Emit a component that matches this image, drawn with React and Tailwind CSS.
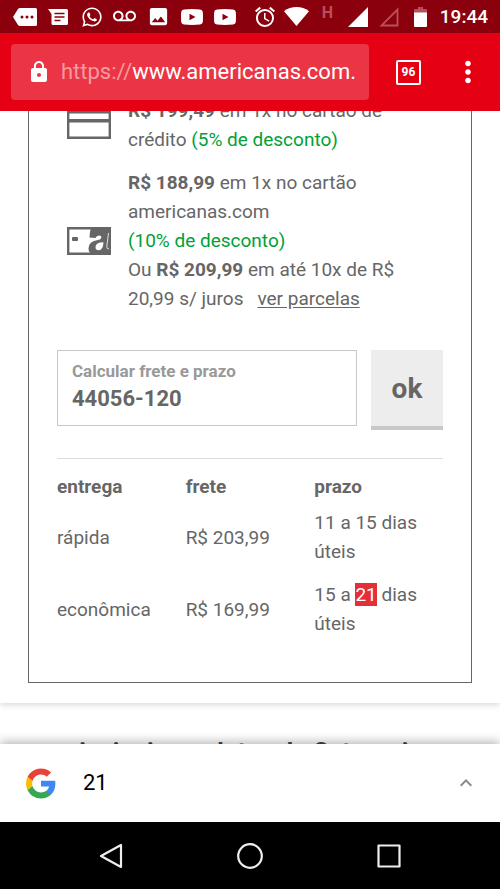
import React, { useState } from 'react';
import { FaWhatsapp } from 'react-icons/fa';
import {
  MdAlarm, MdImage, MdKeyboardArrowUp, MdLock, MdMoreVert, MdSignalCellular4Bar, MdVoicemail,
} from 'react-icons/md';

const shipping = [
  { name: 'rápida', price: 'R$ 203,99', from: '11 a ', to: '15', selected: false },
  { name: 'econômica', price: 'R$ 169,99', from: '15 a ', to: '21', selected: true },
];

function TagIcon() {
  return (
    <svg width="24" height="18" viewBox="0 0 24 18">
      <path d="M7 0h15.500q1.500 0 1.500 1.500v15q0 1.500-1.500 1.500H7q-1.200 0-2-1L0 9l5-8q.8-1 2-1z" fill="#fff" />
      <g fill="#8a000d">
        <circle cx="9" cy="9" r="1.500" />
        <circle cx="14" cy="9" r="1.500" />
        <circle cx="19" cy="9" r="1.500" />
      </g>
    </svg>
  );
}

function MessageIcon() {
  return (
    <svg width="20" height="16" viewBox="0 0 20 16">
      <path d="M0 0h18.500q1.500 0 1.500 1.500v13q0 1.500-1.500 1.500H5q-1.500 0-1.500-1.500V5z" fill="#fff" />
      <path d="M6.500 4.500h10M6.500 8h10M6.500 11.500h6" stroke="#8a000d" strokeWidth="1.500" />
    </svg>
  );
}

function VideoIcon() {
  return (
    <svg width="22" height="16" viewBox="0 0 22 16">
      <path d="M3 .4Q11-.4 19 .4q2.600.2 2.800 2.600.4 5 0 10-.2 2.400-2.800 2.600-8 .8-16 0Q.4 15.400.2 13q-.4-5 0-10Q.4.600 3 .4z" fill="#fff" />
      <path d="M8.500 4.800v6.400L14.500 8z" fill="#8a000d" />
    </svg>
  );
}

function WifiIcon() {
  return (
    <svg width="25" height="19" viewBox="0 0 25 19">
      <path d="M12.500 19L0 4.200Q5.500 0 12.500 0T25 4.200z" fill="#fff" />
    </svg>
  );
}

function NoSignalIcon() {
  return (
    <svg width="20" height="20" viewBox="0 0 20 20">
      <path d="M18.500 2.500v16h-16z" fill="none" stroke="#b8505c" strokeWidth="1.800" />
    </svg>
  );
}

function BatteryIcon() {
  return (
    <svg width="13" height="20" viewBox="0 0 13 20">
      <path d="M4 0h5v2h3q1 0 1 1v3H0V3q0-1 1-1h3z" fill="#b8505c" />
      <path d="M0 5.500h13V19q0 1-1 1H1q-1 0-1-1z" fill="#fff" />
    </svg>
  );
}

function StatusBar() {
  return (
    <div className="flex h-[33px] shrink-0 items-center bg-[#8a000d] pl-2 pr-3 text-white">
      <div className="grid w-[234px] grid-cols-7 place-items-center">
        <TagIcon />
        <MessageIcon />
        <FaWhatsapp size={22} />
        <MdVoicemail size={23} />
        <MdImage size={23} />
        <VideoIcon />
        <VideoIcon />
      </div>
      <div className="ml-auto grid w-[186px] grid-cols-6 place-items-center">
        <MdAlarm size={24} />
        <WifiIcon />
        <span className="pb-2 text-base leading-4 font-bold text-[#b8505c]">H</span>
        <MdSignalCellular4Bar size={24} />
        <NoSignalIcon />
        <BatteryIcon />
      </div>
      <span className="ml-1 text-[19px] leading-6 font-medium">19:44</span>
    </div>
  );
}

function Toolbar() {
  return (
    <header className="flex h-[78px] shrink-0 items-center bg-[#e60014] pl-[11px] text-white">
      <button
        type="button"
        className="flex h-14 min-w-0 flex-1 items-center gap-[10px] overflow-hidden rounded-sm bg-[#eb3545] pl-4 pr-2"
      >
        <MdLock size={24} className="shrink-0" />
        <span className="text-[22px] leading-7 whitespace-nowrap">
          <span className="text-[#f59aa2]">https://</span>www.americanas.com.
        </span>
      </button>
      <button
        type="button"
        className="ml-[27px] size-[25px] rounded-xs border-2 border-white text-center text-xs leading-5 font-bold"
      >
        96
      </button>
      <button type="button" aria-label="Menu" className="mr-6 ml-[39px] flex w-4 justify-center">
        <MdMoreVert size={34} className="shrink-0" />
      </button>
    </header>
  );
}

function CardIcon() {
  return (
    <svg width="44" height="28" viewBox="0 0 44 28" className="shrink-0">
      <path d="M1.200 1.200h41.600v25.600H1.200z" fill="none" stroke="#666" strokeWidth="2.400" />
      <path d="M1 9.800h42" stroke="#666" strokeWidth="3.400" />
    </svg>
  );
}

function StoreCardIcon() {
  return (
    <svg width="44" height="28" viewBox="0 0 44 28" className="shrink-0">
      <path d="M1.200 1.200h41.600v25.600H1.200z" fill="#fff" stroke="#666" strokeWidth="2.400" />
      <rect x="5" y="10" width="6" height="4" rx="1" fill="#666" />
      {/* dark panel whose left edge is the letter's hook and bowl */}
      <path d="M24 1h19v26H26q-4.500-1-4.500-5.500 0-7.500 9.500-8.500 3-.4 3.300-2.200.3-2.300-2.300-2.300-2.500 0-3.500 2.500l-6-.5Q22.500 5 24 1z" fill="#666" />
      <path d="M36.500 15.200q-8 0-8 4.800 0 3.200 3.200 3.200 4.400 0 4.800-8z" fill="#fff" />
      <path d="M41.500 6l-1.700 13.500q-.2 2.500 2.200 2.500" fill="none" stroke="#fff" strokeWidth=".8" />
    </svg>
  );
}

function Payments() {
  return (
    <div className="flex flex-col gap-[14px] pl-[10px]">
      <div className="flex items-center gap-[17px]">
        <CardIcon />
        <p>
          <b>R$ 199,49</b> em 1x no cartão de<br />
          crédito <span className="text-[#00a136]">(5% de desconto)</span>
        </p>
      </div>
      <div className="flex items-center gap-[17px]">
        <StoreCardIcon />
        <p>
          <b>R$ 188,99</b> em 1x no cartão<br />
          americanas.com<br />
          <span className="text-[#00a136]">(10% de desconto)</span><br />
          Ou <b>R$ 209,99</b> em até 10x de R$<br />
          20,99 s/ juros
          <a href="#parcelas" className="ml-[14px] underline underline-offset-2">ver parcelas</a>
        </p>
      </div>
    </div>
  );
}

function ShippingForm() {
  const [zip, setZip] = useState('44056-120');

  return (
    <form className="mt-[37px] flex items-start gap-[14px]" onSubmit={e => e.preventDefault()}>
      <div className="min-w-0 flex-1 border border-[#c8c8c8] px-[14px] pt-2 pb-[11px]">
        <label htmlFor="zip" className="block text-[17px] leading-6 font-bold text-[#999]">
          Calcular frete e prazo
        </label>
        <input
          id="zip"
          value={zip}
          onChange={e => setZip(e.target.value)}
          className="block h-[31px] w-full text-[22px] font-bold outline-none"
        />
      </div>
      <button type="submit" className="h-20 w-[72px] border-b-4 border-[#c8c8c8] bg-[#ededed] text-[28px] font-bold">
        ok
      </button>
    </form>
  );
}

function ShippingTable() {
  return (
    <div className="mt-7 border-t border-[#ddd] pt-3">
      <table className="w-full table-fixed text-left">
        <thead>
          <tr className="h-[30px]">
            <th>entrega</th>
            <th>frete</th>
            <th>prazo</th>
          </tr>
        </thead>
        <tbody>
          {shipping.map(s => (
            <tr key={s.name}>
              <td className="py-[7px]">{s.name}</td>
              <td className="py-[7px]">{s.price}</td>
              <td className="py-[7px]">
                {s.from}
                <span className={s.selected ? 'bg-[#e62e38] text-white' : ''}>{s.to}</span>
                {' dias'}<br />úteis
              </td>
            </tr>
          ))}
        </tbody>
      </table>
    </div>
  );
}

function GoogleLogo() {
  return (
    <svg width="30" height="31" viewBox="0 0 18 18" className="shrink-0">
      <path fill="#4285F4" d="M17.640 9.200c0-.64-.06-1.250-.16-1.840H9v3.480h4.840a4.140 4.140 0 0 1-1.800 2.720v2.260h2.920c1.700-1.570 2.680-3.880 2.680-6.620z" />
      <path fill="#34A853" d="M9 18c2.430 0 4.470-.8 5.960-2.180l-2.920-2.260c-.8.540-1.840.86-3.040.86-2.340 0-4.330-1.580-5.040-3.710H.96v2.330A9 9 0 0 0 9 18z" />
      <path fill="#FBBC05" d="M3.960 10.710A5.400 5.400 0 0 1 3.680 9c0-.59.1-1.170.28-1.710V4.960H.96A9 9 0 0 0 0 9c0 1.450.35 2.830.96 4.040z" />
      <path fill="#EA4335" d="M9 3.580c1.320 0 2.500.45 3.440 1.350l2.580-2.590A9 9 0 0 0 .96 4.960l3 2.330C4.670 5.160 6.660 3.580 9 3.580z" />
    </svg>
  );
}

function SearchSheet() {
  return (
    <section className="relative flex h-[78px] shrink-0 items-center bg-white pl-[26px] pr-[22px] text-black shadow-[0_-2px_10px_rgba(0,0,0,0.3)]">
      <GoogleLogo />
      <span className="ml-[27px] text-[22px] leading-7">21</span>
      <button type="button" aria-label="Expandir" className="ml-auto text-[#888]">
        <MdKeyboardArrowUp size={24} />
      </button>
    </section>
  );
}

function NavBar() {
  return (
    <nav className="relative flex h-[67px] shrink-0 items-center justify-center gap-[111px] bg-black">
      <button type="button" aria-label="Voltar">
        <svg width="28" height="28" viewBox="0 0 28 28" fill="none" stroke="#eee" strokeWidth="2.200" strokeLinejoin="round">
          <path d="M24 3v22L4 14z" />
        </svg>
      </button>
      <button type="button" aria-label="Início">
        <svg width="28" height="28" viewBox="0 0 28 28" fill="none" stroke="#eee" strokeWidth="2.200">
          <circle cx="14" cy="14" r="11.800" />
        </svg>
      </button>
      <button type="button" aria-label="Recentes">
        <svg width="28" height="28" viewBox="0 0 28 28" fill="none" stroke="#eee" strokeWidth="2.200" strokeLinejoin="round">
          <path d="M3.500 3.500h21v21h-21z" />
        </svg>
      </button>
    </nav>
  );
}

export default function App() {
  return (
    <div className="flex h-screen flex-col overflow-hidden bg-white font-[Roboto,sans-serif] text-[#666]">
      <StatusBar />
      <Toolbar />
      <main className="min-h-0 flex-1 overflow-hidden">
        <div className="-mt-[15px] px-7 pb-5 text-[19px] leading-[29px] shadow-[0_2px_6px_rgba(0,0,0,0.15)]">
          <div className="border border-t-0 border-[#666] px-7 pb-[37px]">
            <Payments />
            <ShippingForm />
            <ShippingTable />
          </div>
        </div>
        <h2 className="px-14 pt-[34px] text-[25px] leading-8 font-bold text-[#444]">principais produtos da Categoria</h2>
      </main>
      <SearchSheet />
      <NavBar />
    </div>
  );
}
